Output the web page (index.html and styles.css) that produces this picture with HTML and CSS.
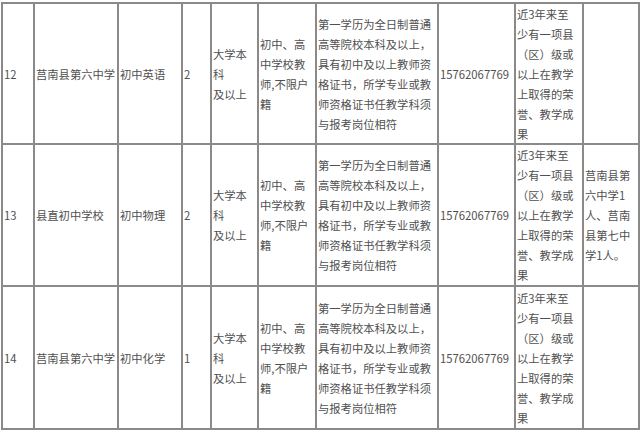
FILE: index.html
```html
<!DOCTYPE html>
<html lang="zh-CN">
<head>
<meta charset="utf-8">
<title>岗位表</title>
<link rel="stylesheet" href="styles.css">
</head>
<body>
<div class="sheet">
  <div class="cell">12</div>
  <div class="cell">莒南县第六中学</div>
  <div class="cell">初中英语</div>
  <div class="cell">2</div>
  <div class="cell">大学本科<br>及以上</div>
  <div class="cell">初中、高中学校教师,不限户籍</div>
  <div class="cell">第一学历为全日制普通高等院校本科及以上，具有初中及以上教师资格证书，所学专业或教师资格证书任教学科须与报考岗位相符</div>
  <div class="cell">15762067769</div>
  <div class="cell award">近3年来至少有一项县（区）级或以上在教学上取得的荣誉、教学成果</div>
  <div class="cell"></div>

  <div class="cell">13</div>
  <div class="cell">县直初中学校</div>
  <div class="cell">初中物理</div>
  <div class="cell">2</div>
  <div class="cell">大学本科<br>及以上</div>
  <div class="cell">初中、高中学校教师,不限户籍</div>
  <div class="cell">第一学历为全日制普通高等院校本科及以上，具有初中及以上教师资格证书，所学专业或教师资格证书任教学科须与报考岗位相符</div>
  <div class="cell">15762067769</div>
  <div class="cell award">近3年来至少有一项县（区）级或以上在教学上取得的荣誉、教学成果</div>
  <div class="cell">莒南县第六中学1人、莒南县第七中学1人。</div>

  <div class="cell">14</div>
  <div class="cell">莒南县第六中学</div>
  <div class="cell">初中化学</div>
  <div class="cell">1</div>
  <div class="cell">大学本科<br>及以上</div>
  <div class="cell">初中、高中学校教师,不限户籍</div>
  <div class="cell">第一学历为全日制普通高等院校本科及以上，具有初中及以上教师资格证书，所学专业或教师资格证书任教学科须与报考岗位相符</div>
  <div class="cell">15762067769</div>
  <div class="cell award">近3年来至少有一项县（区）级或以上在教学上取得的荣誉、教学成果</div>
  <div class="cell"></div>
</div>
</body>
</html>
```

FILE: styles.css
```css
html, body {
  margin: 0;
  padding: 0;
  overflow: hidden;
  background: #ffffff;
}

body {
  font-family: "Noto Sans CJK SC", "Noto Sans", sans-serif;
  font-size: 11.3px;
  line-height: 20px;
  color: #505050;
}

.sheet {
  display: grid;
  width: max-content;
  margin: 2px 0 0 1px;
  padding: 2px;
  gap: 2px;
  background: #8a8a8a;
  grid-template-columns: 30px 82px 62px 27px 45px 56px 120px 75px 66px 54px;
  grid-template-rows: 139px 140px 141px;
}

.cell {
  background: #ffffff;
  display: flex;
  align-items: center;
  padding: 0 1px;
  box-sizing: border-box;
}

.award {
  padding-right: 6px;
}
```
